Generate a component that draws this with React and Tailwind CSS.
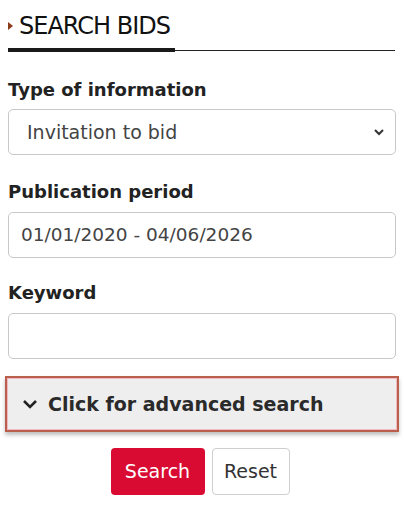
import React from 'react'

const App = () => {
  return (
    <div className='w-[404px] h-[506px] bg-white px-2 pt-[13px] font-["DejaVu_Sans",sans-serif] text-[#222]'>
      {/* title */}
      <div className='flex items-end'>
        <div className='flex items-center gap-[6px] w-[167px] pb-[9px] border-b-4 border-[#1a1a1a] whitespace-nowrap'>
          <span className='w-0 h-0 border-y-[4px] border-y-transparent border-l-[5px] border-l-[#8b3a1a]' />
          <h2 className='text-[24px] leading-[26px] tracking-[-1px] text-[#111]'>SEARCH BIDS</h2>
        </div>
        <div className='flex-1 border-b border-[#222] mr-[1px] mb-[1px]' />
      </div>

      {/* form */}
      <div className='mt-[27px] flex flex-col'>
        <label className='font-bold text-[18px] leading-[22px]'>Type of information</label>
        <div className='mt-[8px] h-[46px] rounded-[5px] border border-[#c8c8c8] flex items-center pl-[18px] pr-[10px] text-[19px] text-[#444]'>
          <span className='flex-1'>Invitation to bid</span>
          <svg width='12' height='12' viewBox='0 0 12 12' fill='none' stroke='#333' strokeWidth='2'>
            <path d='M2 4l4 4 4-4' />
          </svg>
        </div>

        <label className='mt-[26px] font-bold text-[18px] leading-[22px]'>Publication period</label>
        <div className='mt-[9px] h-[46px] rounded-[5px] border border-[#c8c8c8] flex items-center pl-[12px] text-[18.5px] text-[#444]'>
          01/01/2020 - 04/06/2026
        </div>

        <label className='mt-[24px] font-bold text-[18px] leading-[22px]'>Keyword</label>
        <div className='mt-[9px] h-[46px] rounded-[5px] border border-[#c8c8c8]' />
      </div>

      {/* advanced */}
      <div className='mt-[17px] -mx-[3px] border-2 border-[#b8604c] shadow-[0_3px_4px_rgba(0,0,0,0.25)]'>
        <div className='h-[52px] bg-[#eeeeee] border border-[#f4b8c4] flex items-center pl-[14px] gap-[10px] font-bold text-[19px] text-[#2a2a2a]'>
          <svg width='16' height='12' viewBox='0 0 16 12' fill='none' stroke='#222' strokeWidth='2.6'>
            <path d='M2 3l6 6 6-6' />
          </svg>
          <span>Click for advanced search</span>
        </div>
      </div>

      {/* buttons */}
      <div className='mt-[16px] flex justify-center gap-[7px] pr-[4px]'>
        <button className='w-[94px] h-[47px] rounded-[4px] bg-[#d90b32] text-white text-[19px]'>Search</button>
        <button className='w-[78px] h-[47px] rounded-[4px] border border-[#cfcfcf] bg-white text-[19px] text-[#333]'>Reset</button>
      </div>
    </div>
  )
}

export default App
